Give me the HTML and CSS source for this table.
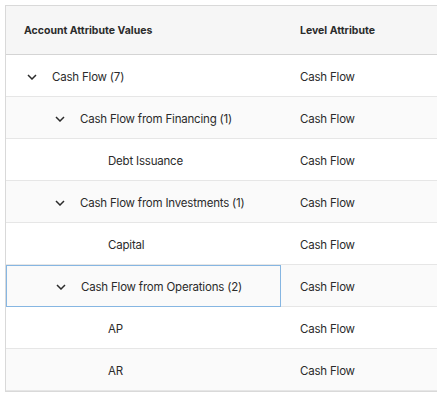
FILE: index.html
```html
<!DOCTYPE html>
<html lang="en">
<head>
<meta charset="UTF-8" />
<title>Account Attributes</title>
<link rel="stylesheet" href="styles.css">
</head>
<body>
<div class="grid">
  <div class="row head">
    <div class="cell name">Account Attribute Values</div>
    <div class="cell level">Level Attribute</div>
  </div>

  <div class="row">
    <div class="cell name lv0"><span class="toggle"><svg viewBox="0 0 10 6"><path d="M1 1l4 4 4-4"/></svg></span>Cash Flow (7)</div>
    <div class="cell level">Cash Flow</div>
  </div>
  <div class="row">
    <div class="cell name lv1"><span class="toggle"><svg viewBox="0 0 10 6"><path d="M1 1l4 4 4-4"/></svg></span>Cash Flow from Financing (1)</div>
    <div class="cell level">Cash Flow</div>
  </div>
  <div class="row">
    <div class="cell name lv2">Debt Issuance</div>
    <div class="cell level">Cash Flow</div>
  </div>
  <div class="row">
    <div class="cell name lv1"><span class="toggle"><svg viewBox="0 0 10 6"><path d="M1 1l4 4 4-4"/></svg></span>Cash Flow from Investments (1)</div>
    <div class="cell level">Cash Flow</div>
  </div>
  <div class="row">
    <div class="cell name lv2">Capital</div>
    <div class="cell level">Cash Flow</div>
  </div>
  <div class="row">
    <div class="cell name lv1 focused"><span class="toggle"><svg viewBox="0 0 10 6"><path d="M1 1l4 4 4-4"/></svg></span>Cash Flow from Operations (2)</div>
    <div class="cell level">Cash Flow</div>
  </div>
  <div class="row">
    <div class="cell name lv2">AP</div>
    <div class="cell level">Cash Flow</div>
  </div>
  <div class="row">
    <div class="cell name lv2">AR</div>
    <div class="cell level">Cash Flow</div>
  </div>
</div>
</body>
</html>
```

FILE: styles.css
```css
body {
  margin: 0;
  padding: 5px 0 0 5px;
  background-color: #fff;
  color: #2b2b2b;
  font-family: 'Inter', 'Helvetica Neue', Arial, sans-serif;
  font-size: 11.5px;
  letter-spacing: -0.2px;
  overflow: hidden;
}

.grid {
  width: 440px;
  border: 1px solid #d9d9d9;
  border-right: none;
}

.row {
  display: grid;
  grid-template-columns: 275px 1fr;
  height: 41px;
  border-bottom: 1px solid #e6e6e6;
}

.row:nth-child(odd) {
  background-color: #fafafa;
}

.row.head {
  height: 48px;
  background-color: #f6f6f6;
  border-bottom: 1px solid #d4d4d4;
  font-weight: 700;
  font-size: 10.5px;
  letter-spacing: 0;
}

.cell {
  display: flex;
  align-items: center;
  padding-top: 2px;
  box-sizing: border-box;
}

.head .cell {
  padding-top: 0;
}

.name {
  padding-left: 18px;
}

.level {
  padding-left: 19px;
}

.lv0 { padding-left: 18px; }
.lv1 { padding-left: 46px; }
.lv2 { padding-left: 102px; }

.toggle {
  width: 28px;
  display: flex;
  align-items: center;
  padding-left: 3px;
  box-sizing: border-box;
}

.toggle svg {
  width: 10px;
  height: 6px;
  fill: none;
  stroke: #2b2b2b;
  stroke-width: 1.5;
}

.focused {
  border: 1px solid #86b6e2;
  margin-bottom: -1px;
}
```
